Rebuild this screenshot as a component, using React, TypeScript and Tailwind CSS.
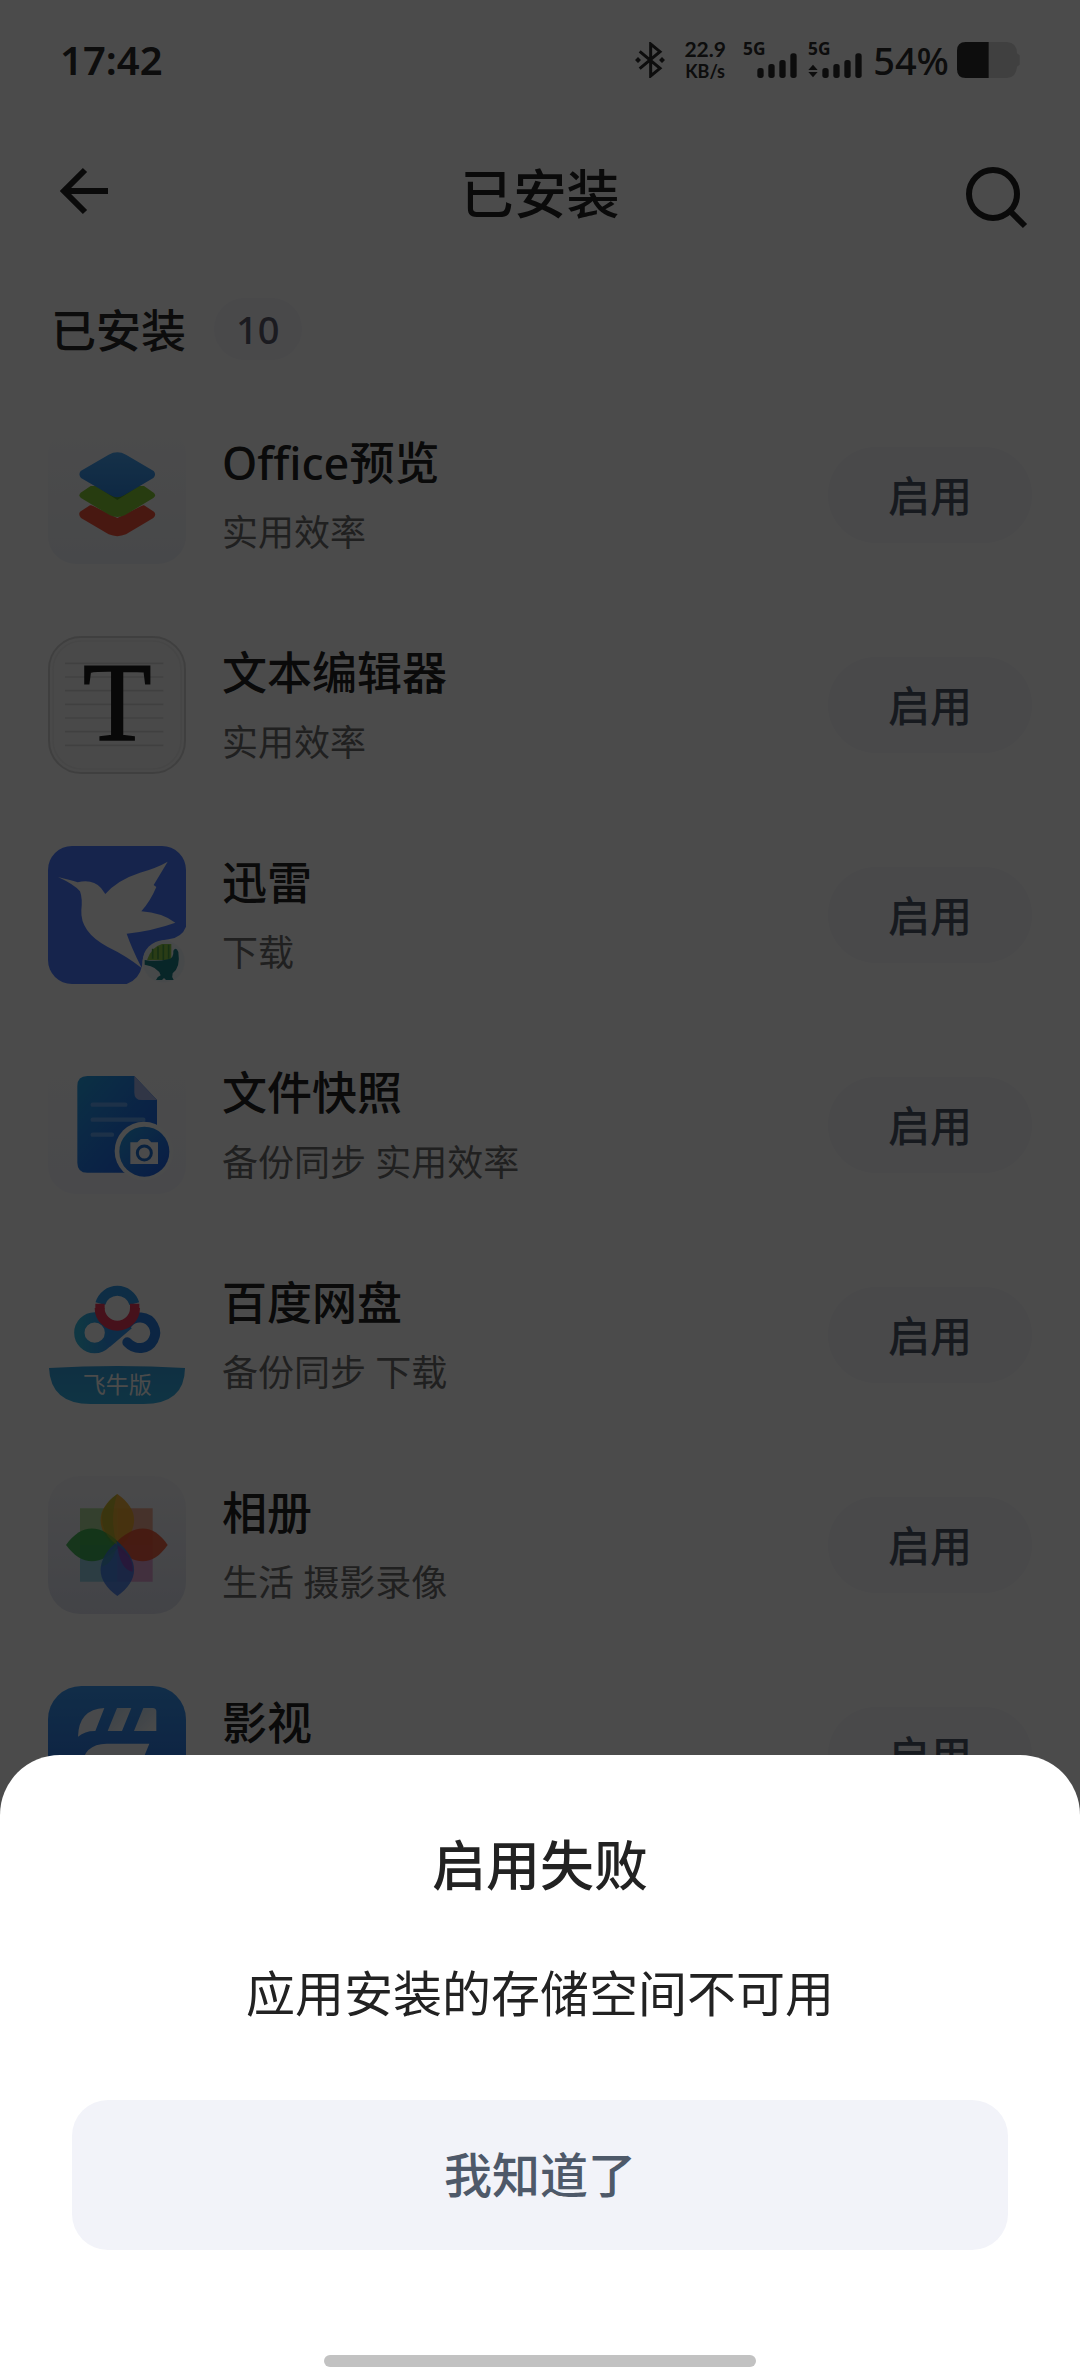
import type { ReactNode } from "react";

const FONT = "font-['Noto_Sans','Noto_Sans_CJK_SC',sans-serif]";

function OfficeIcon() {
  return (
    <svg viewBox="54 18 414 414" className="size-full" aria-hidden="true">
      <defs>
        <linearGradient id="officeBg" x1="0" y1="0" x2="0" y2="1">
          <stop offset="0" stopColor="#fbfbfb" />
          <stop offset="1" stopColor="#eef1f7" />
        </linearGradient>
        <linearGradient id="officeBlue" x1="0" y1="0" x2="0" y2="1">
          <stop offset="0" stopColor="#48a4f2" />
          <stop offset="1" stopColor="#2f86e0" />
        </linearGradient>
      </defs>
      <rect x="54" y="18" width="414" height="414" rx="84" fill="url(#officeBg)" />
      <path d="M150 275 L180 256 H342 L372 275 Q380 284 370 294 L288 343 Q262 354 236 343 L153 294 Q144 284 150 275Z" fill="#f0523a" />
      <path d="M152 250 L182 254 L262 294 L342 254 L371 250 L262 196Z" fill="#f6f7f9" />
      <path d="M152 218 L182 198 H342 L371 218 Q380 226 370 234 L284 286 Q262 296 240 286 L153 234 Q144 226 152 218Z" fill="#84c936" />
      <path d="M185 190 L262 240 L340 190 L262 150Z" fill="#4f9a2c" />
      <path d="M152 153 L236 104 Q262 90 288 104 L371 153 Q380 164 370 174 L282 226 Q262 238 242 226 L153 174 Q144 164 152 153Z" fill="url(#officeBlue)" />
    </svg>
  );
}

function EditorIcon() {
  return (
    <svg viewBox="54 48 414 414" className="size-full" aria-hidden="true">
      <rect x="57" y="51" width="408" height="408" rx="96" fill="#f4f4f4" stroke="#d4d4d4" strokeWidth="6" />
      <rect x="69" y="63" width="384" height="384" rx="86" fill="none" stroke="#ebebeb" strokeWidth="5" />
      {[130, 171, 212, 253, 294, 335, 376].map((y) => (
        <path key={y} d={`M105 ${y}H400`} stroke="#d8d8d8" strokeWidth="5" />
      ))}
      <text x="262" y="359" textAnchor="middle" fontSize="336" fill="#1c1c1c" stroke="#1c1c1c" strokeWidth="5" className="font-['Liberation_Serif',serif]">T</text>
    </svg>
  );
}

function ThunderIcon() {
  return (
    <svg viewBox="54 48 414 414" className="size-full" aria-hidden="true">
      <rect x="54" y="48" width="414" height="414" rx="72" fill="#4a7aff" />
      <path d="M84 141 Q120 150 143 157 Q188 146 213 174 L226 192 Q262 150 330 128 Q380 114 413 95 L371 165 L379 171 Q362 212 334 244 Q395 248 436 278 Q370 302 290 311 Q304 352 335 414 Q290 378 232 350 Q150 306 154 240 Q158 206 150 184 Q134 164 84 141Z" fill="#fafafa" />
      <path d="M468 290 Q456 322 416 328 Q338 336 336 408 Q328 448 290 462 H480 V290Z" fill="#fafafa" />
      <circle cx="401" cy="394" r="63" fill="#eef4f8" />
      <path d="M352 388 Q366 350 396 342 L424 342 V390 H352Z" fill="#8cc84b" />
      <path d="M368 356 V386 M384 350 V388 M400 344 V390 M416 344 V386" stroke="#4fa046" strokeWidth="5" />
      <path d="M344 390 Q380 396 414 388 Q432 384 430 362 Q438 348 445 366 Q452 412 428 430 Q424 440 431 450 H408 L402 444 L396 450 H378 Q382 440 392 436 Q384 410 344 404Z" fill="#1d7f88" />
    </svg>
  );
}

function SnapshotIcon() {
  return (
    <svg viewBox="54 18 414 414" className="size-full" aria-hidden="true">
      <defs>
        <linearGradient id="snapBg" x1="0" y1="0" x2="0" y2="1">
          <stop offset="0" stopColor="#fbfbfb" />
          <stop offset="1" stopColor="#f4f5fa" />
        </linearGradient>
        <linearGradient id="snapDoc" x1="0" y1="0" x2="1" y2="1">
          <stop offset="0" stopColor="#27a2e4" />
          <stop offset="0.55" stopColor="#2478e8" />
          <stop offset="1" stopColor="#1f5ce4" />
        </linearGradient>
      </defs>
      <rect x="54" y="18" width="414" height="414" rx="84" fill="url(#snapBg)" />
      <path d="M172 78 H313 L381 150 V368 H172 Q142 368 142 338 V108 Q142 78 172 78Z" fill="url(#snapDoc)" />
      <path d="M313 78 L381 150 H335 Q313 150 313 128Z" fill="#a5b4ea" />
      <path d="M188 164H286M188 209H340M188 254H246" stroke="#62a4f2" strokeWidth="13" strokeLinecap="round" />
      <circle cx="342" cy="303" r="88" fill="#f9fafc" />
      <circle cx="343" cy="305" r="75" fill="url(#snapDoc)" />
      <path d="M301 277 H322 L332 267 H354 L364 277 H384 V342 H301Z" fill="#fafafa" />
      <circle cx="343" cy="309" r="21" fill="none" stroke="#2070d0" strokeWidth="9" />
    </svg>
  );
}

function NetdiskIcon() {
  return (
    <svg viewBox="54 18 414 414" className="size-full" aria-hidden="true">
      <defs>
        <linearGradient id="diskLeft" x1="0" y1="0" x2="1" y2="0">
          <stop offset="0" stopColor="#36b8e0" />
          <stop offset="1" stopColor="#2f94ee" />
        </linearGradient>
        <linearGradient id="diskBanner" x1="0" y1="0" x2="0" y2="1">
          <stop offset="0" stopColor="#329fdc" />
          <stop offset="1" stopColor="#32aee4" />
        </linearGradient>
      </defs>
      <circle cx="194" cy="218" r="46" fill="none" stroke="url(#diskLeft)" strokeWidth="31" />
      <path d="M230 250 L296 194" stroke="#2f94ee" strokeWidth="29" />
      <path d="M292 247 Q310 266 334 264 A46 46 0 1 0 293 190" fill="none" stroke="#287ee0" strokeWidth="30" strokeLinecap="round" />
      <circle cx="262" cy="144" r="38" fill="#fafafa" />
      <path d="M209 144 A53 53 0 0 0 315 144" fill="none" stroke="#ea3a5a" strokeWidth="30" />
      <path d="M211 131 A53 53 0 0 1 313 131" fill="none" stroke="#2f98e6" strokeWidth="30" />
      <path d="M196 131 H224 V146 H196Z M300 131 H328 V146 H300Z" fill="#ea3a5a" />
      <path d="M57 324 Q262 312 465 324 Q464 432 340 432 H182 Q62 432 57 324Z" fill="url(#diskBanner)" />
      <text x="262" y="399" textAnchor="middle" fontSize="69" fill="#fafafa" className="font-['Noto_Sans_CJK_SC',sans-serif]">飞牛版</text>
    </svg>
  );
}

function AlbumIcon() {
  return (
    <svg viewBox="54 48 414 414" className="size-full" aria-hidden="true">
      <defs>
        <linearGradient id="albumBg" x1="0" y1="0" x2="0" y2="1">
          <stop offset="0" stopColor="#f6f6f9" />
          <stop offset="1" stopColor="#dfe2ee" />
        </linearGradient>
      </defs>
      <rect x="54" y="48" width="414" height="414" rx="96" fill="url(#albumBg)" />
      <path d="M150 145H262V255H150Z" fill="#aed89a" />
      <path d="M262 145H368V255H262Z" fill="#eca890" />
      <path d="M150 255H262V365H150Z" fill="#94cce0" />
      <path d="M262 255H368V365H262Z" fill="#dca0d0" />
      <path d="M262 102 C328 148 330 208 262 268 C194 208 196 148 262 102Z" fill="#eda82a" fillOpacity="0.9" />
      <path d="M413 255 C368 188 312 190 250 255 C312 320 368 320 413 255Z" fill="#ea5230" fillOpacity="0.88" />
      <path d="M108 255 C156 188 212 190 274 255 C212 320 156 320 108 255Z" fill="#37ac4a" fillOpacity="0.88" />
      <path d="M262 408 C196 362 194 302 262 244 C330 302 328 362 262 408Z" fill="#4078e4" fillOpacity="0.85" />
      <path d="M262 255 Q210 220 217 160 Q228 124 262 102 Q236 180 262 255Z" fill="#a8b82c" fillOpacity="0.6" />
      <path d="M262 255 Q312 290 308 335 Q270 330 262 255Z" fill="#9640b4" fillOpacity="0.7" />
      <path d="M262 255 Q212 290 216 320 Q250 310 262 255Z" fill="#3f9ab0" fillOpacity="0.6" />
    </svg>
  );
}

function VideoIcon() {
  return (
    <svg viewBox="144 78 414 414" className="size-full" aria-hidden="true">
      <defs>
        <linearGradient id="videoBg" x1="0" y1="0" x2="0" y2="1">
          <stop offset="0" stopColor="#3a98f2" />
          <stop offset="0.6" stopColor="#2e76e0" />
          <stop offset="1" stopColor="#2862cc" />
        </linearGradient>
        <linearGradient id="videoStripe" x1="0" y1="0" x2="1" y2="1">
          <stop offset="0" stopColor="#c4dcf2" />
          <stop offset="1" stopColor="#fafafa" />
        </linearGradient>
      </defs>
      <rect x="144" y="78" width="414" height="414" rx="100" fill="url(#videoBg)" />
      <path d="M313 144 L286 213 Q256 212 234 230 Q236 148 313 144Z" fill="#f2f5fa" />
      <path d="M351 144 H394 L366 213 H323Z" fill="url(#videoStripe)" />
      <path d="M430 144 H458 Q469 144 469 155 V213 H402Z" fill="url(#videoStripe)" />
      <path d="M448 251 L424 310 H330 V420 H246 V320 Q250 252 320 251Z" fill="#f2f5fa" />
    </svg>
  );
}

const apps: { name: string; tags: string; icon: ReactNode }[] = [
  { name: "Office预览", tags: "实用效率", icon: <OfficeIcon /> },
  { name: "文本编辑器", tags: "实用效率", icon: <EditorIcon /> },
  { name: "迅雷", tags: "下载", icon: <ThunderIcon /> },
  { name: "文件快照", tags: "备份同步 实用效率", icon: <SnapshotIcon /> },
  { name: "百度网盘", tags: "备份同步 下载", icon: <NetdiskIcon /> },
  { name: "相册", tags: "生活 摄影录像", icon: <AlbumIcon /> },
  { name: "影视", tags: "影音", icon: <VideoIcon /> },
];

function Signal({ data }: { data?: boolean }) {
  return (
    <svg viewBox="0 -18 165 144" className="h-12 w-[55px]" fill="#2c2c2c" aria-hidden="true">
      <text x="0" y="40" fontSize="52" fontWeight="700" className="font-['Noto_Sans',sans-serif]">5G</text>
      {data && <path d="M15 68 L29 84 H1Z M15 106 L29 90 H1Z" />}
      <rect x="43" y="78" width="19" height="30" rx="8" />
      <rect x="76" y="66" width="19" height="42" rx="8" />
      <rect x="109" y="54" width="19" height="54" rx="8" />
      <rect x="142" y="34" width="19" height="74" rx="8" />
    </svg>
  );
}

function StatusBar() {
  return (
    <div className="flex h-[120px] items-center justify-between px-[60px] text-[#2c2c2c]">
      <span className="text-[40px] leading-none font-semibold">17:42</span>
      <div className="flex items-center">
        <svg viewBox="103 66 90 108" className="h-9 w-[30px]" fill="none" stroke="#2c2c2c" strokeWidth="9" aria-hidden="true">
          <path d="M117 94 L178 145 L150 168 V72 L178 95 L117 146" />
          <path d="M103 120 L112 111 L121 120 L112 129Z M175 120 L184 111 L193 120 L184 129Z" fill="#2c2c2c" stroke="none" />
        </svg>
        <div className="ml-4 flex w-12 flex-col items-center font-['Lato',sans-serif] font-bold">
          <span className="text-[21px] leading-[22px]">22.9</span>
          <span className="text-[18px] leading-[22px]">KB/s</span>
        </div>
        <div className="ml-[14px] flex gap-[10px]">
          <Signal />
          <Signal data />
        </div>
        <span className="ml-[10px] text-[38px] leading-none font-medium">54%</span>
        <svg viewBox="1072 66 189 108" className="ml-2 h-9 w-[63px]" aria-hidden="true">
          <path d="M1166 66 H1222 Q1252 68 1252 100 L1260 106 V134 L1252 140 Q1250 172 1222 174 H1166Z" fill="#d6d6d6" />
          <path d="M1167 66 H1098 Q1072 66 1072 92 V148 Q1072 174 1098 174 H1167Z" fill="#2c2c2c" />
        </svg>
      </div>
    </div>
  );
}

function Header() {
  return (
    <header className="flex h-[148px] items-center justify-between px-[54px] text-[#222]">
      <button type="button" aria-label="返回" className="flex size-15 items-center">
        <svg viewBox="0 0 60 60" className="size-full" fill="none" stroke="currentColor" strokeWidth="6" aria-hidden="true">
          <path d="M54 27 H10 M31 6 L10 27 L31 48" />
        </svg>
      </button>
      <h1 className="text-[53px] leading-[72px] font-medium">已安装</h1>
      <button type="button" aria-label="搜索" className="flex size-15 items-center">
        <svg viewBox="0 0 60 60" className="size-full overflow-visible" fill="none" stroke="currentColor" strokeWidth="6" aria-hidden="true">
          <circle cx="27" cy="30" r="24" />
          <path d="M44 47 L59 62" />
        </svg>
      </button>
    </header>
  );
}

export default function App() {
  return (
    <div className={`h-screen overflow-hidden bg-[#fbfbfb] ${FONT}`} lang="zh-CN">
      <StatusBar />
      <Header />
      <main>
        <div className="flex h-[122px] items-center gap-7 px-[51px]">
          <h2 className="pt-1 text-[45px] leading-[60px] font-medium text-[#2a2a2a]">已安装</h2>
          <span className="rounded-full bg-[#f4f4f9] px-[22px] py-1 text-[38px] leading-[54px] font-medium text-[#5a5a6c]">10</span>
        </div>
        <ul>
          {apps.map((app) => (
            <li key={app.name} className="flex h-[210px] items-center gap-9 px-12">
              <div className="size-[138px] shrink-0">{app.icon}</div>
              <div className="min-w-0 flex-1 pt-1">
                <h3 className="truncate text-[45px] leading-[72px] font-medium text-[#222]">{app.name}</h3>
                <p className="truncate text-[36px] leading-[68px] text-[#6c6c6c]">{app.tags}</p>
              </div>
              <button type="button" className="h-24 w-[204px] shrink-0 rounded-full bg-[#f3f4f8] text-[42px] font-medium text-[#4e5969]">启用</button>
            </li>
          ))}
        </ul>
      </main>

      <div className="fixed inset-0 flex flex-col justify-end bg-black/70">
        <section role="alertdialog" aria-labelledby="sheet-title" aria-describedby="sheet-text" className="flex flex-col items-center rounded-t-[60px] bg-white px-18 pt-[74px] pb-[9px]">
          <h2 id="sheet-title" className="text-[54px] leading-[72px] font-medium text-[#222]">启用失败</h2>
          <p id="sheet-text" className="mt-15 text-[49px] leading-[64px] text-[#222]">应用安装的存储空间不可用</p>
          <button type="button" className="mt-[75px] h-[150px] w-full rounded-[36px] bg-[#f2f3f9] text-[48px] font-medium text-[#4e5969]">我知道了</button>
          <div className="mt-[105px] h-3 w-[432px] rounded-full bg-[#c2c2c2]" />
        </section>
      </div>
    </div>
  );
}
